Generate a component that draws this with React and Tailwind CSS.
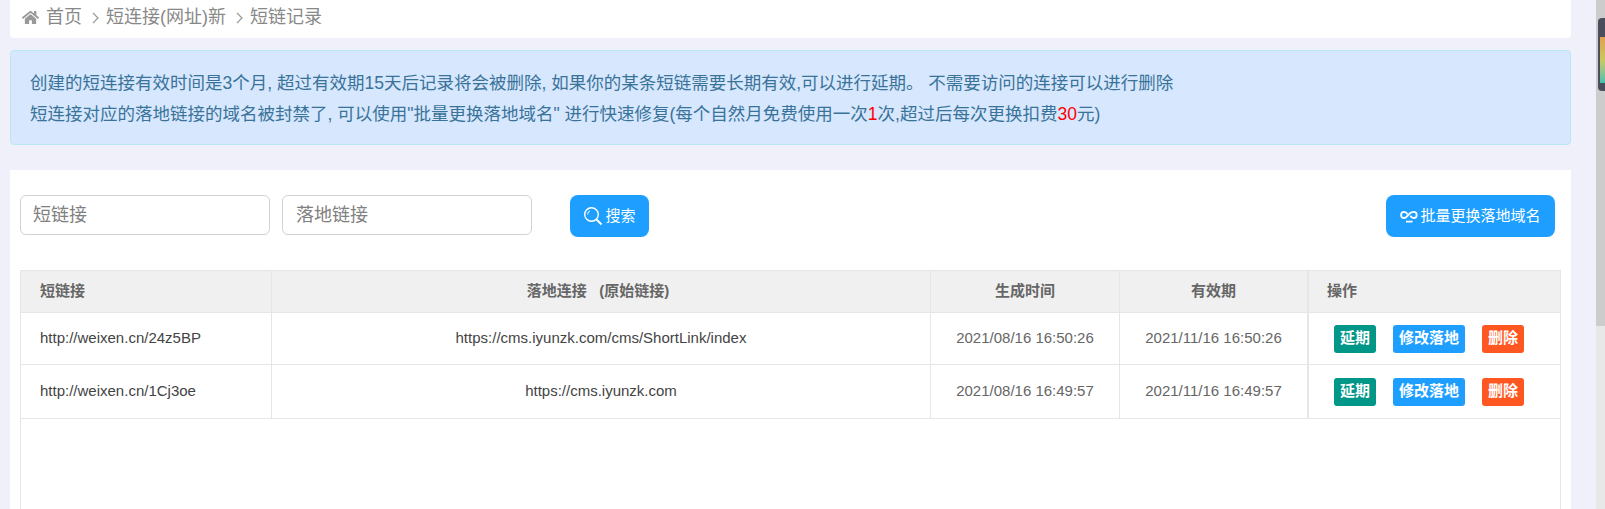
import { Fragment } from "react";
import { FaHome } from "react-icons/fa";

const rows = [
  { short: "http://weixen.cn/24z5BP", url: "https://cms.iyunzk.com/cms/ShortLink/index", created: "2021/08/16 16:50:26", expires: "2021/11/16 16:50:26", h: "h-[52px]" },
  { short: "http://weixen.cn/1Cj3oe", url: "https://cms.iyunzk.com", created: "2021/08/16 16:49:57", expires: "2021/11/16 16:49:57", h: "h-[54px]" },
];

const Chevron = () => (
  <svg width="8" height="12" viewBox="0 0 8 12" className="ml-[10px] mr-[6px] shrink-0" fill="none" stroke="#999" strokeWidth="1.2">
    <path d="M1 1l5 5-5 5" />
  </svg>
);

const Breadcrumb = () => (
  <div className="h-[38px] bg-white rounded-b flex items-center pl-[12px] pb-[3px] text-[18px] text-[#888]">
    <FaHome className="text-[#999] text-[17px] mr-[7px]" />
    <span>首页</span>
    <Chevron />
    <span>短连接(网址)新</span>
    <Chevron />
    <span>短链记录</span>
  </div>
);

const Notice = () => (
  <div className="mt-3 h-[95px] bg-[#d6e7fe] border border-[#b8e8f4] rounded pl-[19px] pt-[17px] text-[17.5px] leading-[31px] text-[#3a7399]">
    <p>创建的短连接有效时间是3个月, 超过有效期15天后记录将会被删除, 如果你的某条短链需要长期有效,可以进行延期。 不需要访问的连接可以进行删除</p>
    <p>
      短连接对应的落地链接的域名被封禁了, 可以使用"批量更换落地域名" 进行快速修复(每个自然月免费使用一次
      <span className="text-[#ff0000]">1</span>次,超过后每次更换扣费<span className="text-[#ff0000]">30</span>元)
    </p>
  </div>
);

const SearchIcon = () => (
  <svg width="20" height="20" viewBox="0 0 20 20" fill="none" stroke="#fff" strokeWidth="1.4">
    <circle cx="8.5" cy="8.5" r="6.8" />
    <path d="M13.5 13.5l5 5" strokeWidth="2" />
    <path d="M4.6 8.5a3.9 3.9 0 0 1 2.4-3.6" strokeWidth="1" />
  </svg>
);

const LinkIcon = () => (
  <svg width="18" height="14" viewBox="0 0 18 14" fill="none" stroke="#fff" strokeWidth="1.8">
    <path d="M7.5 5.2C6.6 3.6 5.5 2.8 4.2 2.8a3.1 3.1 0 0 0 0 6.2c1.2 0 2.3-.7 3.3-2.2l2.6-2.6c1-1 2.2-1.400 3.500-1.400a3.100 3.100 0 0 1 0 6.200c-1.200 0-2.300-.8-3.200-2.300" />
    <path d="M6 12.600h6.500" />
  </svg>
);

const Toolbar = () => (
  <div className="flex items-start pt-[25px] pr-[16px] pl-[10px] h-[100px]">
    <input placeholder="短链接" className="w-[250px] h-[40px] border border-[#d2d2d2] rounded-md px-[12px] text-[18px] placeholder:text-[#808080] outline-none" />
    <input placeholder="落地链接" className="w-[250px] h-[40px] ml-3 border border-[#d2d2d2] rounded-md px-[13px] text-[18px] placeholder:text-[#808080] outline-none" />
    <button className="ml-[38px] w-[79px] h-[42px] bg-[#1e9fff] rounded-lg text-white text-[15px] flex items-center justify-center gap-[2px]">
      <SearchIcon />
      搜索
    </button>
    <button className="ml-auto w-[169px] h-[42px] bg-[#1e9fff] rounded-lg text-white text-[15px] flex items-center justify-center gap-[2px]">
      <LinkIcon />
      批量更换落地域名
    </button>
  </div>
);

const ActionButton = ({ color, width, children }) => (
  <button className={`${color} ${width} h-[28px] rounded-[3px] text-white text-[15px] font-bold flex items-center justify-center`}>
    {children}
  </button>
);

const LinkTable = () => (
  <div className="mx-[10px] flex-1 border-x border-[#e6e6e6]">
    <div className="grid grid-cols-[251px_659px_189px_189px_1fr] text-[15px]">
      <div className="h-[43px] bg-[#f0f0f0] border-y border-r border-[#e6e6e6] flex items-center pl-[19px] font-bold text-[#666]">短链接</div>
      <div className="h-[43px] bg-[#f0f0f0] border-y border-r border-[#e6e6e6] flex items-center justify-center pr-[6px] font-bold text-[#666] whitespace-pre">落地连接   (原始链接)</div>
      <div className="h-[43px] bg-[#f0f0f0] border-y border-r border-[#e6e6e6] flex items-center justify-center font-bold text-[#666]">生成时间</div>
      <div className="h-[43px] bg-[#f0f0f0] border-y border-r-2 border-[#e6e6e6] flex items-center justify-center font-bold text-[#666]">有效期</div>
      <div className="h-[43px] bg-[#f0f0f0] border-y border-[#e6e6e6] flex items-center pl-[18px] font-bold text-[#666]">操作</div>
      {rows.map((row) => (
        <Fragment key={row.short}>
          <div className={`${row.h} border-b border-r border-[#e6e6e6] flex items-center pl-[19px] text-[#444]`}>{row.short}</div>
          <div className={`${row.h} border-b border-r border-[#e6e6e6] flex items-center justify-center text-[#444]`}>{row.url}</div>
          <div className={`${row.h} border-b border-r border-[#e6e6e6] flex items-center justify-center text-[#666]`}>{row.created}</div>
          <div className={`${row.h} border-b border-r-2 border-[#e6e6e6] flex items-center justify-center text-[#666]`}>{row.expires}</div>
          <div className={`${row.h} border-b border-[#e6e6e6] flex items-center pl-[25px] gap-[17px]`}>
            <ActionButton color="bg-[#009688]" width="w-[42px]">延期</ActionButton>
            <ActionButton color="bg-[#1e9fff]" width="w-[72px]">修改落地</ActionButton>
            <ActionButton color="bg-[#ff5722]" width="w-[42px]">删除</ActionButton>
          </div>
        </Fragment>
      ))}
    </div>
  </div>
);

const Scrollbar = () => (
  <div className="w-[9px] h-full bg-[#e8e8e8] relative shrink-0">
    <div className="h-[326px] bg-[#cccccc]" />
    <div className="absolute top-[18px] left-[2px] w-[7px] h-[73px] rounded-l bg-[#4a4e5c] flex flex-col justify-end pb-[8px]">
      <div className="ml-[2px] h-[46px] bg-gradient-to-b from-[#e0a050] via-[#c8c860] to-[#40c0b0]" />
    </div>
  </div>
);

export default function App() {
  return (
    <div
      className="h-[509px] w-full flex overflow-hidden bg-[#f0f0fa]"
      style={{ fontFamily: '"Liberation Sans", "Noto Sans CJK SC", sans-serif' }}
    >
      <div className="flex-1 flex flex-col pl-[10px] pr-[25px]">
        <Breadcrumb />
        <Notice />
        <div className="mt-[25px] flex-1 bg-white flex flex-col">
          <Toolbar />
          <LinkTable />
        </div>
      </div>
      <Scrollbar />
    </div>
  );
}
